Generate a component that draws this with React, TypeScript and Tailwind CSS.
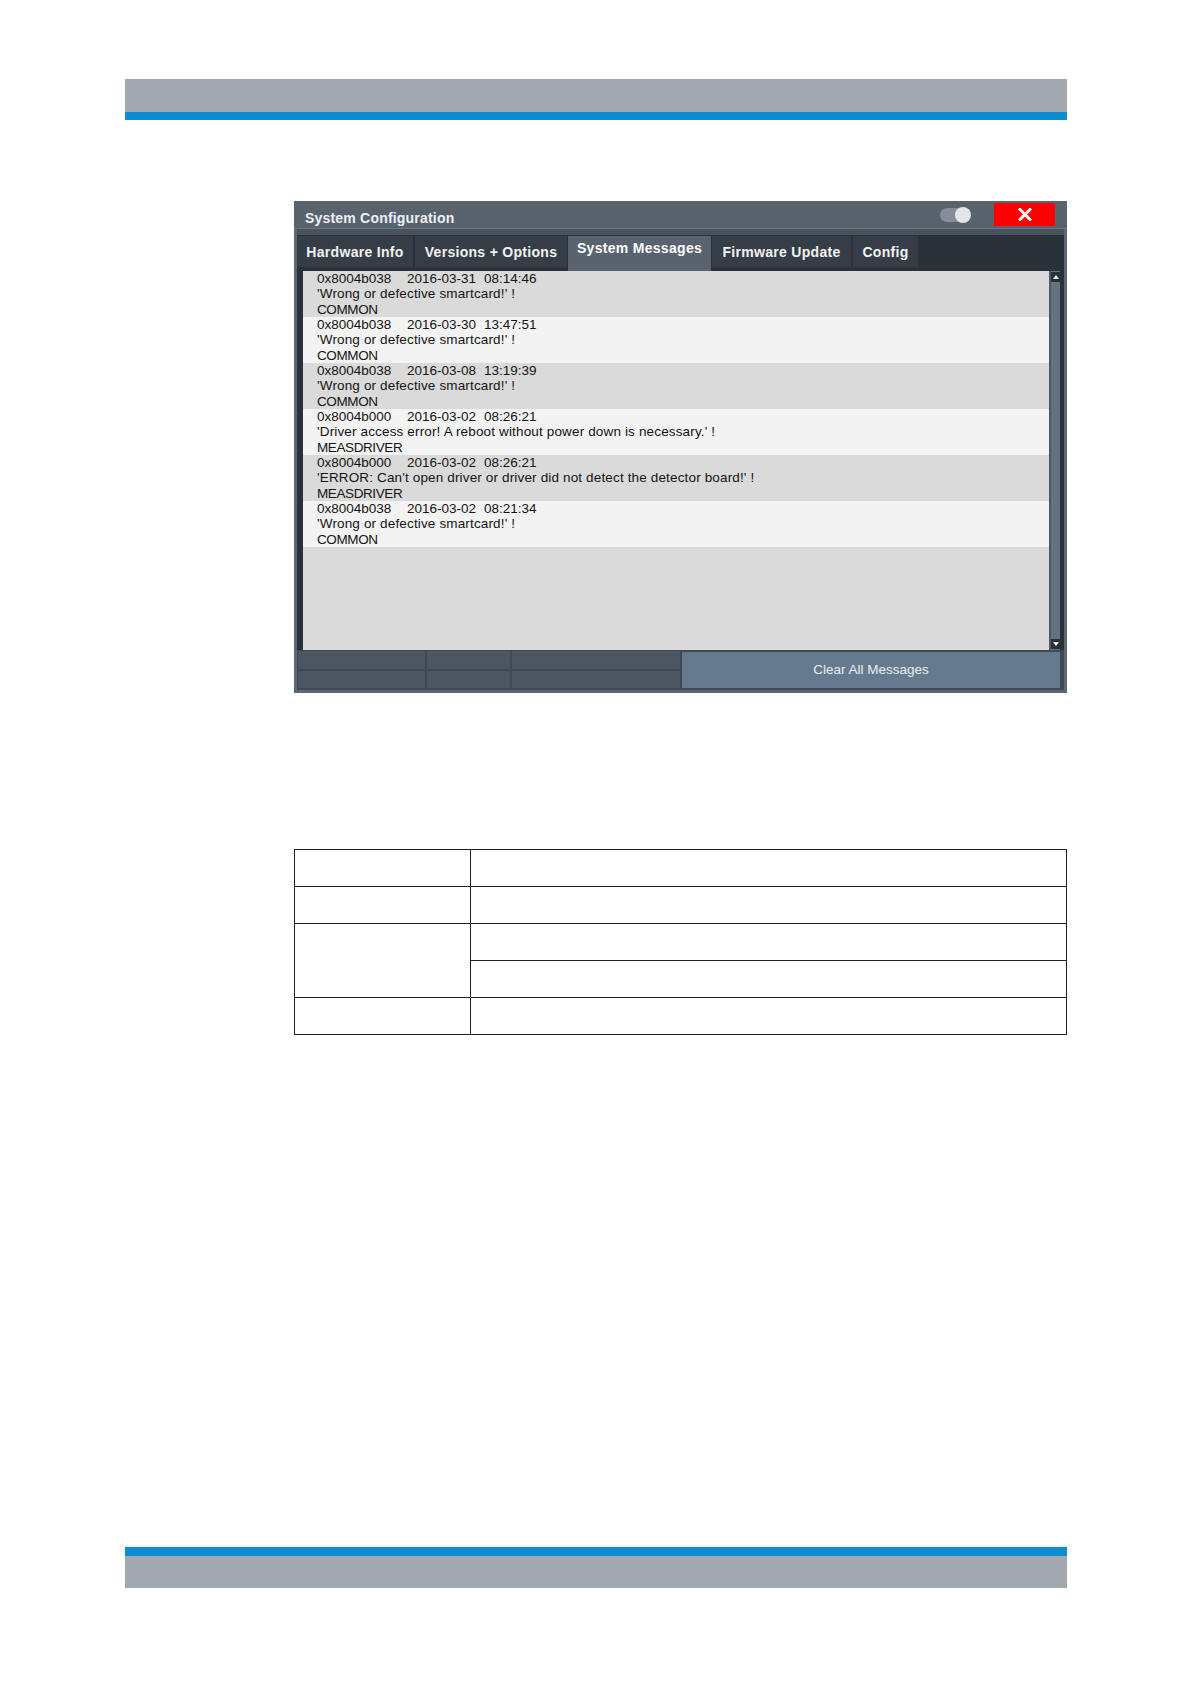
import React from "react";

const rows = [
  { code: "0x8004b038", date: "2016-03-31", time: "08:14:46", msg: "'Wrong or defective smartcard!' !", src: "COMMON" },
  { code: "0x8004b038", date: "2016-03-30", time: "13:47:51", msg: "'Wrong or defective smartcard!' !", src: "COMMON" },
  { code: "0x8004b038", date: "2016-03-08", time: "13:19:39", msg: "'Wrong or defective smartcard!' !", src: "COMMON" },
  { code: "0x8004b000", date: "2016-03-02", time: "08:26:21", msg: "'Driver access error! A reboot without power down is necessary.' !", src: "MEASDRIVER" },
  { code: "0x8004b000", date: "2016-03-02", time: "08:26:21", msg: "'ERROR: Can't open driver or driver did not detect the detector board!' !", src: "MEASDRIVER" },
  { code: "0x8004b038", date: "2016-03-02", time: "08:21:34", msg: "'Wrong or defective smartcard!' !", src: "COMMON" },
];

const tabs = [
  { label: "Hardware Info", w: "w-[116px]", active: false },
  { label: "Versions + Options", w: "w-[152px]", active: false },
  { label: "System Messages", w: "w-[143px]", active: true },
  { label: "Firmware Update", w: "w-[139px]", active: false },
  { label: "Config", w: "w-[65px]", active: false },
];

function Dialog() {
  return (
    <div className="ml-[294px] mt-[81px] w-[773px] h-[492px] bg-[#5e6872] flex flex-col">
      {/* title bar */}
      <div className="h-[28px] bg-[#59636e] border-b border-[#6c7680] flex items-start">
        <div className="pl-[11px] pt-[8px] text-[14px] leading-[18px] font-bold text-[#eef0f2] tracking-[0.2px]">
          System Configuration
        </div>
        <div className="flex-1" />
        <svg width="32" height="16" viewBox="0 0 32 16" className="mt-[6px]">
          <rect x="0" y="1" width="30" height="14" rx="7" fill="#858d96" />
          <circle cx="23" cy="8" r="8" fill="#e3e6e9" />
        </svg>
        <div className="ml-[22px] mt-[2px] w-[61px] h-[23px] bg-[#ff0000] flex items-center justify-center">
          <svg width="14" height="13" viewBox="0 0 14 13">
            <path d="M2 1.5 L12 11.5 M12 1.5 L2 11.5" stroke="#ffffff" strokeWidth="3" strokeLinecap="square" />
          </svg>
        </div>
        <div className="w-[12px]" />
      </div>
      {/* body */}
      <div className="mx-[3px] flex-1 flex flex-col bg-[#2a3139]">
        <div className="h-[6px] bg-[#4a535d]" />
        {/* tabs */}
        <div className="h-[36px] flex items-start pt-[1px]">
          {tabs.map((t, i) => (
            <div
              key={t.label}
              className={
                t.active
                  ? `${t.w} h-[35px] bg-[#58636f] flex justify-center pt-[3px] text-[14px] leading-[18px] font-bold text-white tracking-[0.3px] ml-[1px] mr-[1px]`
                  : `${t.w} h-[31px] bg-[#353d47] flex items-center justify-center text-[14px] leading-[18px] font-bold text-[#f2f2f2] tracking-[0.3px] ${i === 1 ? "ml-[2px]" : ""} ${i === 4 ? "ml-[2px]" : ""}`
              }
            >
              {t.label}
            </div>
          ))}
        </div>
        {/* list + scrollbar */}
        <div className="h-[379px] flex">
          <div className="w-[6px]" />
          <div className="w-[746px] bg-[#dadada] flex flex-col">
            {rows.map((r, i) => (
              <div
                key={i}
                className={`h-[46px] pl-[14px] text-[13.5px] leading-[15.33px] text-[#141414] whitespace-nowrap tracking-[0.15px] ${i % 2 === 0 ? "bg-[#dadada]" : "bg-[#f3f3f3]"}`}
              >
                <div className="tracking-[0px]">
                  <span className="inline-block w-[90px]">{r.code}</span>
                  <span className="inline-block w-[77px]">{r.date}</span>
                  <span>{r.time}</span>
                </div>
                <div>{r.msg}</div>
                <div className="tracking-[-0.4px]">{r.src}</div>
              </div>
            ))}
          </div>
          <div className="w-[11px] bg-[#647180] border-l-2 border-[#4f5a67] flex flex-col justify-between">
            <div className="h-[10px] mt-[1px] bg-[#2b3036] flex items-center justify-center">
              <svg width="6" height="4" viewBox="0 0 6 4"><path d="M0 4 L3 0 L6 4 Z" fill="#ffffff" /></svg>
            </div>
            <div className="h-[10px] mb-[1px] bg-[#2b3036] flex items-center justify-center">
              <svg width="6" height="4" viewBox="0 0 6 4"><path d="M0 0 L3 4 L6 0 Z" fill="#ffffff" /></svg>
            </div>
          </div>
          <div className="flex-1" />
        </div>
        {/* bottom bar */}
        <div className="h-[40px] flex bg-[#3f4853]">
          <div className="w-[383px] grid grid-cols-[127px_83px_1fr] grid-rows-2 gap-[2px] pt-[1px] pb-[2px] pl-[1px]">
            <div className="bg-[#4b5662]" />
            <div className="bg-[#4b5662]" />
            <div className="bg-[#4b5662]" />
            <div className="bg-[#4b5662]" />
            <div className="bg-[#4b5662]" />
            <div className="bg-[#4b5662]" />
          </div>
          <div className="ml-[2px] mt-[2px] h-[36px] w-[378px] bg-[#667a8f] flex items-center justify-center text-[13.5px] text-[#e9edf1]">
            Clear All Messages
          </div>
        </div>
      </div>
      <div className="h-[3px]" />
    </div>
  );
}

export default function App() {
  const cell = "border-[1.5px] border-[#231f20] p-0";
  return (
    <div
      className="w-[1191px] h-[1684px] bg-white overflow-hidden"
      style={{ fontFamily: '"Liberation Sans", Arial, sans-serif' }}
    >
      <div className="pt-[79px] pl-[125px]">
        <div className="w-[942px] h-[33px] bg-[#a1a9ae]" />
        <div className="w-[942px] h-[8px] bg-[#0a8ed0]" />
      </div>
      <Dialog />
      <div className="ml-[294px] mt-[156px] h-[190px] w-[773px]">
        <table className="w-[773px] table-fixed border-collapse">
          <colgroup>
            <col className="w-[176px]" />
            <col />
          </colgroup>
          <tbody>
            <tr className="h-[37px]"><td className={cell}></td><td className={cell}></td></tr>
            <tr className="h-[37px]"><td className={cell}></td><td className={cell}></td></tr>
            <tr className="h-[37px]"><td className={cell} rowSpan={2}></td><td className={cell}></td></tr>
            <tr className="h-[37px]"><td className={cell}></td></tr>
            <tr className="h-[37px]"><td className={cell}></td><td className={cell}></td></tr>
          </tbody>
        </table>
      </div>
      <div className="ml-[125px] mt-[508px]">
        <div className="w-[942px] h-[9px] bg-[#0a8ed0]" />
        <div className="w-[942px] h-[32px] bg-[#a1a9ae]" />
      </div>
    </div>
  );
}
